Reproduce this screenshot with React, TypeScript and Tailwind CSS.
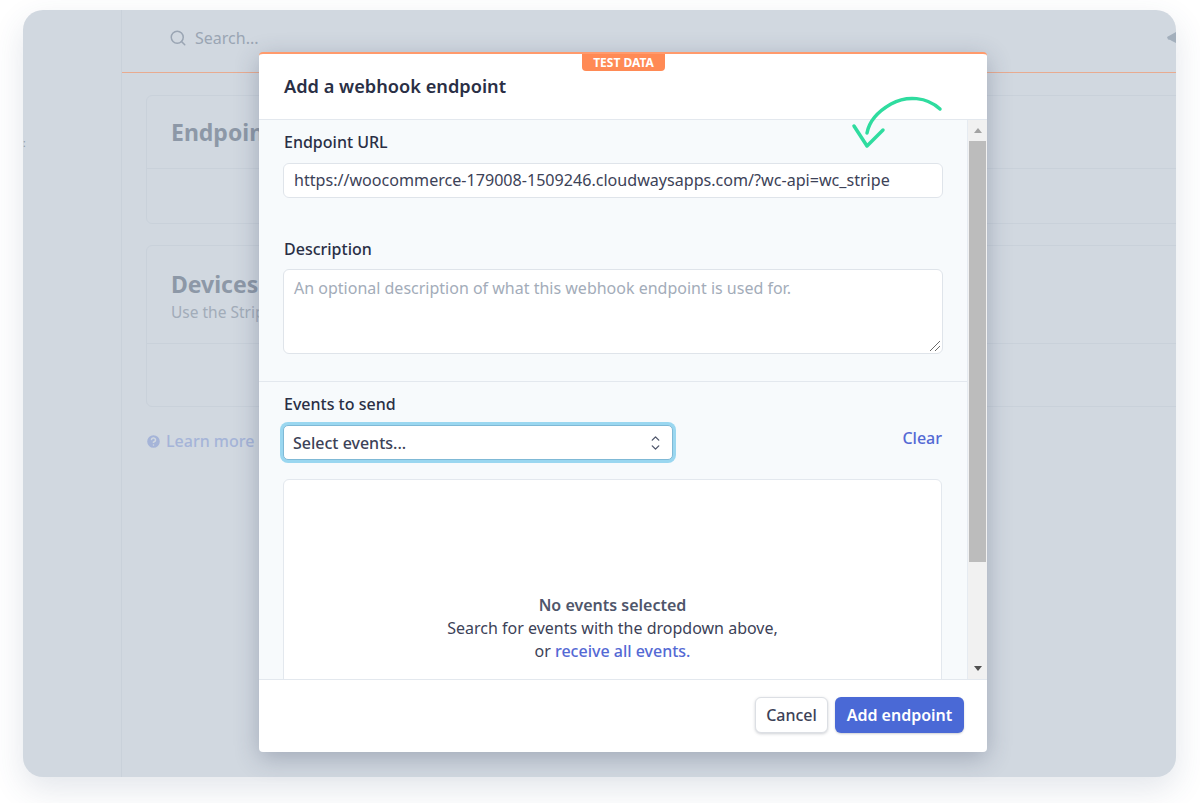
import { Search, CircleHelp, ChevronUp, ChevronDown } from 'lucide-react';

function BackgroundPage() {
  return (
    <div className="flex h-[767px] w-[1153px] overflow-hidden rounded-[20px] bg-[#d1d8e0] shadow-[0_12px_32px_rgba(60,80,110,0.14)]">
      {/* Sidebar */}
      <aside className="flex w-[99px] shrink-0 items-start border-r border-[#c9d1da] pt-[128px]">
        <span className="text-[10px] leading-none text-[#8b98a8]">:</span>
      </aside>

      <div className="min-w-0 flex-1">
        {/* Top bar */}
        <header className="flex h-[63px] items-center justify-between border-b border-[#e8ab90] pb-[7px] pl-[47px]">
          <div className="flex items-center gap-[8px] text-[#9aa5b3]">
            <Search size={18} strokeWidth={2} />
            <span className="text-[16px]">Search...</span>
          </div>
          <svg width="9" height="11" viewBox="0 0 9 11" className="fill-[#a3afbc]">
            <path d="M0 5 9 0v11L4 8.5 3.5 8 1 7.5z" />
          </svg>
        </header>

        {/* Cards */}
        <div className="w-[1061px] pl-[24px] pt-[22px]">
          <section className="h-[129px] rounded-l-[6px] border border-[#c9d1da]">
            <div className="flex h-[73px] items-center border-b border-[#c9d1da] pl-[24px] pt-[1px]">
              <h2 className="text-[23px] font-bold text-[#8d98a7]">Endpoints</h2>
            </div>
          </section>
          <section className="mt-[21px] h-[162px] rounded-l-[6px] border border-[#c9d1da]">
            <div className="h-[98px] border-b border-[#c9d1da] pl-[24px] pt-[21px]">
              <h2 className="text-[23px] leading-[34px] font-bold text-[#8d98a7]">Devices</h2>
              <p className="text-[15.5px] leading-[22px] text-[#a2acb9]">Use the Stripe CLI</p>
            </div>
          </section>
          <div className="mt-[22px] flex items-center gap-[4px] text-[#a5b4d8]">
            <CircleHelp size={17} strokeWidth={2.2} className="-ml-[1px] fill-[#a5b4d8] text-[#d1d8e0]" />
            <span className="text-[16px] font-medium">Learn more</span>
          </div>
        </div>
      </div>
    </div>
  );
}

function Scrollbar() {
  return (
    <div className="flex w-[20px] shrink-0 flex-col items-center border-l border-[#e6ebf1] bg-[#f1f1f1]">
      <div className="flex h-[21px] items-center justify-center">
        <span className="h-0 w-0 border-x-[4px] border-b-[5px] border-x-transparent border-b-[#a3a3a3]" />
      </div>
      <div className="h-[421px] w-[17px] bg-[#bcbcbc]" />
      <div className="flex flex-1 items-end justify-center pb-[8px]">
        <span className="h-0 w-0 border-x-[4px] border-t-[5px] border-x-transparent border-t-[#505050]" />
      </div>
    </div>
  );
}

function AddWebhookModal() {
  return (
    <div className="absolute left-[259px] top-[52px] flex h-[700px] w-[728px] flex-col overflow-hidden rounded-[4px] border-t-2 border-[#ff9a6c] bg-white shadow-[0_6px_24px_rgba(50,60,90,0.3)]">
      <span className="absolute left-[323px] top-0 flex h-[17px] w-[83px] items-center justify-center rounded-b-[4px] bg-[#ff8a55] text-[12px] font-bold text-white">
        TEST DATA
      </span>

      <div className="flex h-[66px] shrink-0 items-center border-b border-[#e3e8ee] pl-[25px] pt-[1px]">
        <h1 className="text-[18.2px] font-semibold text-[#2a2f45]">Add a webhook endpoint</h1>
      </div>

      <div className="flex h-[559px] shrink-0 bg-[#f7fafc]">
        <div className="min-w-0 flex-1 overflow-hidden">
          <div className="border-b border-[#e3e8ee] px-[24px] pb-[27px] pt-[10px]">
            <label className="block pl-[1px] text-[16px] font-medium leading-[24px] text-[#2a2f45]">Endpoint URL</label>
            <div className="mt-[9px] flex h-[35px] items-center rounded-[6px] border border-[#dfe4ea] bg-white pl-[10px] text-[16.1px] text-[#3c4257]">
              https://woocommerce-179008-1509246.cloudwaysapps.com/?wc-api=wc_stripe
            </div>
            <label className="mt-[39px] block pl-[1px] text-[16px] font-medium leading-[24px] text-[#2a2f45]">Description</label>
            <div className="relative mt-[8px] h-[85px] rounded-[6px] border border-[#dfe4ea] bg-white pl-[10px] pt-[6px] text-[16px] text-[#a3acb9]">
              An optional description of what this webhook endpoint is used for.
              <svg className="absolute bottom-[1px] right-[1px]" width="12" height="12" viewBox="0 0 12 12" fill="none" stroke="#6b6b6b" strokeWidth="1">
                <path d="M1 11 11 1M6 11 11 6" />
              </svg>
            </div>
          </div>

          <div className="pl-[24px] pr-[25px] pt-[10px]">
            <label className="block pl-[1px] text-[16px] font-medium leading-[24px] text-[#2a2f45]">Events to send</label>
            <div className="mt-[9px] flex items-center justify-between">
              <div className="flex h-[35px] w-[390px] items-center justify-between rounded-[5px] border border-[#7fb9d6] bg-white pl-[9px] pr-[10px] text-[16px] font-medium text-[#3c4257] shadow-[0_0_0_3px_#9ad7f0]">
                Select events...
                <span className="flex flex-col text-[#4f566b]">
                  <ChevronUp size={13} strokeWidth={2.5} className="-mb-[2px]" />
                  <ChevronDown size={13} strokeWidth={2.5} className="-mt-[2px]" />
                </span>
              </div>
              <span className="-mt-[10px] text-[16px] font-medium text-[#5469d4]">Clear</span>
            </div>

            <div className="mt-[19px] flex h-[300px] flex-col items-center rounded-[6px] border border-[#e3e8ee] bg-white pt-[114px] text-[16px] leading-[23px] text-[#3c4257]">
              <p className="font-semibold text-[#4f566b]">No events selected</p>
              <p>Search for events with the dropdown above,</p>
              <p>
                or <span className="font-medium text-[#5469d4]">receive all events.</span>
              </p>
            </div>
          </div>
        </div>
        <Scrollbar />
      </div>

      <div className="flex flex-1 items-center justify-end gap-[7px] border-t border-[#e3e8ee] pb-[3px] pr-[23px]">
        <button className="h-[36px] w-[73px] rounded-[6px] border border-[#dcdfe4] bg-white text-[16px] font-medium text-[#3c4257] shadow-[0_1px_3px_rgba(60,66,87,0.25)]">
          Cancel
        </button>
        <button className="h-[36px] w-[129px] rounded-[6px] bg-[#4a69d6] text-[16px] font-semibold text-white shadow-[0_1px_2px_rgba(60,66,87,0.25)]">
          Add endpoint
        </button>
      </div>

      {/* hand drawn arrow pointing at the URL field */}
      <svg className="absolute left-[590px] top-[38px]" width="100" height="62" viewBox="0 0 100 62" fill="none" stroke="#2fdc9f" strokeWidth="3.5" strokeLinecap="round" strokeLinejoin="round">
        <path d="M91 17C78 5 58 3 42 12 28 20 20 30 18 41" />
        <path d="M5 34 18 54 34 38" />
      </svg>
    </div>
  );
}

export default function App() {
  return (
    <div className="relative h-[803px] w-[1200px] overflow-hidden bg-white pl-[23px] pt-[10px] font-['Noto_Sans',sans-serif]">
      <BackgroundPage />
      <AddWebhookModal />
    </div>
  );
}
